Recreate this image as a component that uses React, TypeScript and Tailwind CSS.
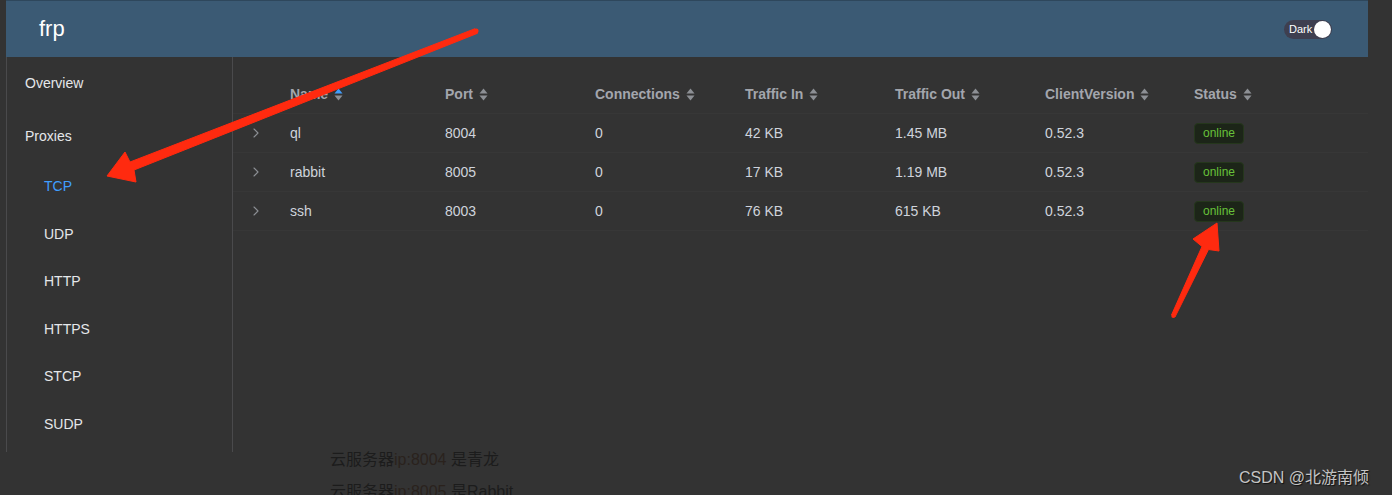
import React from "react";

const cols = ["Name", "Port", "Connections", "Traffic In", "Traffic Out", "ClientVersion", "Status"];
const rows = [
  ["ql", "8004", "0", "42 KB", "1.45 MB", "0.52.3"],
  ["rabbit", "8005", "0", "17 KB", "1.19 MB", "0.52.3"],
  ["ssh", "8003", "0", "76 KB", "615 KB", "0.52.3"],
];

function SortIcon({ active }: { active?: boolean }) {
  return (
    <svg width="9" height="13" viewBox="0 0 9 13" className="ml-[6px] shrink-0">
      <path d="M4.5 0.5 L8.5 5.5 L0.5 5.5 Z" fill={active ? "#409eff" : "#8d9095"} />
      <path d="M4.5 12.5 L8.5 7.5 L0.5 7.5 Z" fill="#8d9095" />
    </svg>
  );
}

function Chevron() {
  return (
    <svg width="6" height="10" viewBox="0 0 6 10">
      <path d="M1 1 L5 5 L1 9" stroke="#8d9095" strokeWidth="1.1" fill="none" strokeLinecap="round" strokeLinejoin="round" />
    </svg>
  );
}

export default function App() {
  const grid = "grid grid-cols-[57px_155px_150px_150px_150px_150px_149px_150px] items-center";
  return (
    <div
      className="relative w-[1392px] h-[495px] overflow-hidden bg-[#333333]"
      style={{ fontFamily: '"Liberation Sans", Arial, sans-serif' }}
    >
      <div className="ml-[6px] w-[1362px]">
        <div className="h-[57px] bg-[#3b5a74] border-t border-[#2e475c] flex items-center justify-between pl-[33px] pr-[36px]">
          <span className="text-white text-[22px] leading-none pb-[1px]">frp</span>
          <div className="flex items-center w-[48px] h-[19px] rounded-full bg-[#3e3f50] pl-[5px] pr-[1px]">
            <span className="text-white text-[11px] leading-none flex-1">Dark</span>
            <span className="w-[17px] h-[17px] rounded-full bg-white" />
          </div>
        </div>
        <div className="flex h-[395px]">
          <div className="w-[227px] border-l border-r border-[#4a4a4c] text-[14px] text-[#e5e7ea]">
            <div className="h-[53px] flex items-center pl-[18px]">Overview</div>
            <div className="h-[53px] flex items-center pl-[18px]">Proxies</div>
            {["TCP", "UDP", "HTTP", "HTTPS", "STCP", "SUDP"].map((t) => (
              <div
                key={t}
                className={`h-[47.5px] flex items-center pl-[37px] ${t === "TCP" ? "text-[#409eff]" : ""}`}
              >
                {t}
              </div>
            ))}
          </div>
          <div className="flex-1 pt-[19px]">
            <div className={`${grid} h-[38px] border-b border-[#373737] text-[14px] font-bold text-[#a3a6ad]`}>
              <div />
              {cols.map((c, i) => (
                <div key={c} className="flex items-center">
                  <span>{c}</span>
                  <SortIcon active={i === 0} />
                </div>
              ))}
            </div>
            {rows.map((r) => (
              <div key={r[0]} className={`${grid} h-[39px] border-b border-[#373737] text-[14px] text-[#cfd3dc]`}>
                <div className="pl-[20px] flex items-center">
                  <Chevron />
                </div>
                {r.map((v, i) => (
                  <div key={i}>{v}</div>
                ))}
                <div>
                  <span className="inline-flex items-center justify-center w-[50px] h-[21px] rounded-[4px] bg-[#1c2518] border border-[#25371c] text-[#67c23a] text-[12px]">
                    online
                  </span>
                </div>
              </div>
            ))}
          </div>
        </div>
      </div>

      <div
        className="-mt-[8px] pl-[330px] text-[16px] leading-[32px] text-[#1c1c1c]"
        style={{ fontFamily: '"Liberation Sans", "Noto Sans CJK SC", sans-serif' }}
      >
        <div>
          云服务器<span className="text-[#2a221d]">ip:8004</span> 是青龙
        </div>
        <div>
          云服务器<span className="text-[#2a221d]">ip:8005</span> 是Rabbit
        </div>
      </div>

      <div
        className="absolute left-[1239px] top-[466px] text-[16px] text-[#c4c4c4] [text-shadow:1px_1px_1px_#111]"
        style={{ fontFamily: '"Liberation Sans", "Noto Sans CJK SC", sans-serif' }}
      >
        CSDN @北游南倾
      </div>

      <svg className="absolute left-0 top-0 pointer-events-none" width="1392" height="495">
        <polygon
          points="107,176 125,152 130,162 475,28.7 477.5,33.3 134,170 136,182"
          fill="#ff2a0f"
          strokeLinejoin="round"
          stroke="#ff2a0f"
          strokeWidth="1"
        />
        <circle cx="476.2" cy="31" r="2.4" fill="#ff2a0f" />
        <polygon
          points="1217,223 1219,251 1208.5,249.5 1175,317 1171.5,315 1202,246.5 1193,239"
          fill="#ff2a0f"
          stroke="#ff2a0f"
          strokeWidth="1"
          strokeLinejoin="round"
        />
        <circle cx="1173.3" cy="316" r="2" fill="#ff2a0f" />
      </svg>
    </div>
  );
}
